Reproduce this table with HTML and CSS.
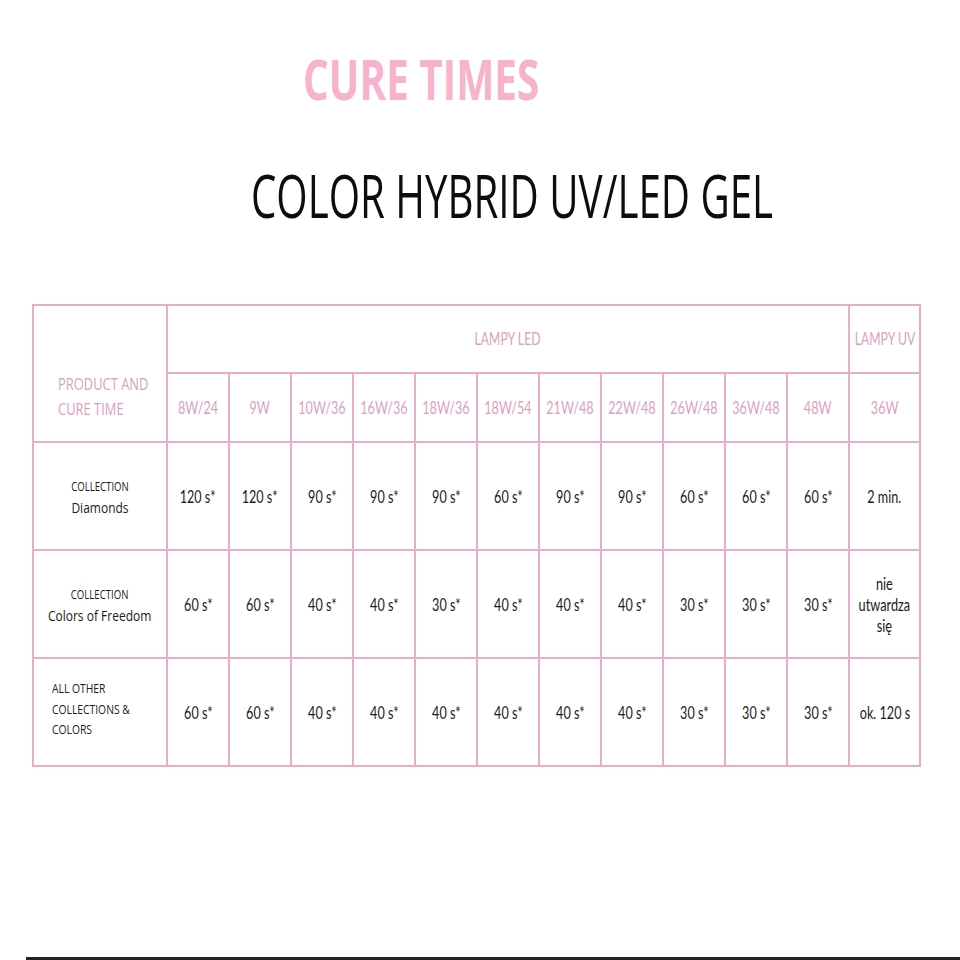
FILE: index.html
```html
<!DOCTYPE html>
<html>
<head>
<meta charset="utf-8">
<link rel="stylesheet" href="styles.css">
</head>
<body>
<div class="page">
  <header class="head">
    <h1 class="brand"><span class="sq">CURE TIMES</span></h1>
    <h2 class="product"><span class="sq2">COLOR HYBRID UV/LED GEL</span></h2>
  </header>
  <table class="grid">
    <colgroup>
      <col class="c-label">
      <col class="c-w"><col class="c-w"><col class="c-w"><col class="c-w"><col class="c-w"><col class="c-w">
      <col class="c-w"><col class="c-w"><col class="c-w"><col class="c-w"><col class="c-w">
      <col class="c-uv">
    </colgroup>
    <thead>
      <tr class="r-group">
        <th rowspan="2" class="corner"><span class="nl">PRODUCT AND<br>CURE TIME</span></th>
        <th colspan="11" class="grp"><span class="n">LAMPY LED</span></th>
        <th class="grp"><span class="n">LAMPY UV</span></th>
      </tr>
      <tr class="r-watt">
        <th><span class="n">8W/24</span></th>
        <th><span class="n">9W</span></th>
        <th><span class="n">10W/36</span></th>
        <th><span class="n">16W/36</span></th>
        <th><span class="n">18W/36</span></th>
        <th><span class="n">18W/54</span></th>
        <th><span class="n">21W/48</span></th>
        <th><span class="n">22W/48</span></th>
        <th><span class="n">26W/48</span></th>
        <th><span class="n">36W/48</span></th>
        <th><span class="n">48W</span></th>
        <th><span class="n">36W</span></th>
      </tr>
    </thead>
    <tbody>
      <tr>
        <th class="lab"><span class="lb"><span class="small">COLLECTION</span><br><span class="big">Diamonds</span></span></th>
        <td><span class="v">120 s*</span></td>
        <td><span class="v">120 s*</span></td>
        <td><span class="v">90 s*</span></td>
        <td><span class="v">90 s*</span></td>
        <td><span class="v">90 s*</span></td>
        <td><span class="v">60 s*</span></td>
        <td><span class="v">90 s*</span></td>
        <td><span class="v">90 s*</span></td>
        <td><span class="v">60 s*</span></td>
        <td><span class="v">60 s*</span></td>
        <td><span class="v">60 s*</span></td>
        <td><span class="v">2 min.</span></td>
      </tr>
      <tr>
        <th class="lab"><span class="lb"><span class="small">COLLECTION</span><br><span class="big">Colors of Freedom</span></span></th>
        <td><span class="v">60 s*</span></td>
        <td><span class="v">60 s*</span></td>
        <td><span class="v">40 s*</span></td>
        <td><span class="v">40 s*</span></td>
        <td><span class="v">30 s*</span></td>
        <td><span class="v">40 s*</span></td>
        <td><span class="v">40 s*</span></td>
        <td><span class="v">40 s*</span></td>
        <td><span class="v">30 s*</span></td>
        <td><span class="v">30 s*</span></td>
        <td><span class="v">30 s*</span></td>
        <td><span class="v ml">nie<br>utwardza<br>się</span></td>
      </tr>
      <tr>
        <th class="lab left"><span class="lbl">ALL OTHER<br>COLLECTIONS &amp;<br>COLORS</span></th>
        <td><span class="v">60 s*</span></td>
        <td><span class="v">60 s*</span></td>
        <td><span class="v">40 s*</span></td>
        <td><span class="v">40 s*</span></td>
        <td><span class="v">40 s*</span></td>
        <td><span class="v">40 s*</span></td>
        <td><span class="v">40 s*</span></td>
        <td><span class="v">40 s*</span></td>
        <td><span class="v">30 s*</span></td>
        <td><span class="v">30 s*</span></td>
        <td><span class="v">30 s*</span></td>
        <td><span class="v">ok. 120 s</span></td>
      </tr>
    </tbody>
  </table>
  <div class="spacer"></div>
  <div class="strip"></div>
</div>
</body>
</html>
```

FILE: styles.css
```css
html, body {
  margin: 0;
  padding: 0;
  background: #ffffff;
}

.page {
  width: 960px;
  height: 960px;
  display: flex;
  flex-direction: column;
  overflow: hidden;
}

.head {
  display: flex;
  flex-direction: column;
}

.brand {
  margin: 50px 0 0 303px;
  font-family: "Open Sans", sans-serif;
  font-weight: 700;
  font-size: 56px;
  line-height: 56px;
  color: #f7b2cc;
  white-space: nowrap;
}

.sq {
  display: inline-block;
  transform: scaleX(0.723);
  transform-origin: left center;
}

.product {
  margin: 59px 0 0 251px;
  font-family: "Open Sans", sans-serif;
  font-weight: 400;
  font-size: 60px;
  line-height: 60px;
  color: #0d0d0d;
  white-space: nowrap;
}

.sq2 {
  display: inline-block;
  transform: scaleX(0.671);
  transform-origin: left center;
}

.grid {
  margin: 79px 0 0 32px;
  border-collapse: collapse;
  table-layout: fixed;
  width: 889px;
  font-family: Lato, sans-serif;
}

.c-label { width: 134px; }
.c-w { width: 62px; }
.c-uv { width: 71px; }

.grid th, .grid td {
  border: 2px solid #e9adc9;
  padding: 0;
  text-align: center;
  vertical-align: middle;
  font-weight: 400;
}

.r-group th { height: 66px; }
.r-watt th { height: 67px; }
.grid tbody tr { height: 108px; }

thead th {
  color: #dc9fbe;
  font-size: 17px;
}

.grid .grp {
  font-size: 16.5px;
}

.n {
  display: inline-block;
  margin: 0 -20px;
  transform: scaleX(0.74);
  white-space: nowrap;
}

.grid .corner {
  text-align: left;
  vertical-align: bottom;
  padding: 0 0 20px 24px;
}

.nl {
  display: inline-block;
  text-align: left;
  font-family: "Open Sans", sans-serif;
  font-size: 17px;
  line-height: 25px;
  transform: scaleX(0.76);
  transform-origin: left center;
  white-space: nowrap;
}

.v {
  display: inline-block;
  margin: 0 -20px;
  font-size: 18px;
  color: #1a1a1a;
  transform: scaleX(0.7);
  white-space: nowrap;
}

.ml {
  font-size: 17px;
  line-height: 21px;
  transform: scaleX(0.75);
}

.lab {
  color: #1b1b1b;
}

.lb {
  display: inline-block;
  margin: 0 -20px;
  font-family: "Open Sans", sans-serif;
  transform: scaleX(0.8);
  white-space: nowrap;
  line-height: 20px;
}

.small { font-size: 12px; }
.big { font-size: 15px; }

.grid .left {
  text-align: left;
  padding: 0 0 4px 18px;
}

.lbl {
  display: inline-block;
  text-align: left;
  font-family: "Open Sans", sans-serif;
  font-size: 12px;
  line-height: 20.5px;
  transform: scaleX(0.86);
  transform-origin: left center;
  white-space: nowrap;
}

.spacer { flex: 1; }

.strip {
  height: 3px;
  margin-left: 26px;
  background: #1d252d;
}
```
